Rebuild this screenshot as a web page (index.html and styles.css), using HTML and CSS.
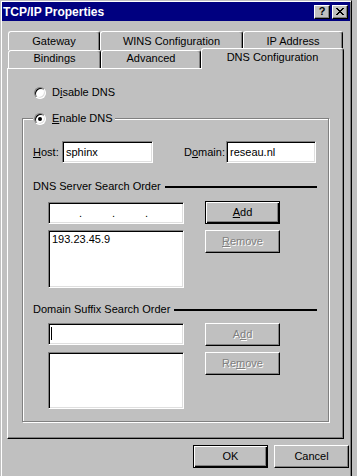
FILE: index.html
```
<!DOCTYPE html>
<html lang="en">
<head>
    <meta charset="UTF-8">
    <meta name="viewport" content="width=device-width, initial-scale=1.0">
    <title>TCP/IP Properties</title>
    <link rel="stylesheet" href="styles.css">
</head>
<body>
    <div class="window">
        <div class="titlebar">
            <span class="title">TCP/IP Properties</span>
            <div class="caption-btns">
                <span class="cap-btn help">?</span>
                <span class="cap-btn close">
                    <svg width="8" height="7" viewBox="0 0 8 7"><path d="M0 0h2v1h-2zM6 0h2v1h-2zM1 1h2v1h-2zM5 1h2v1h-2zM2 2h4v1h-4zM3 3h2v1h-2zM2 4h4v1h-4zM1 5h2v1h-2zM5 5h2v1h-2zM0 6h2v1h-2zM6 6h2v1h-2z" fill="#000"/></svg>
                </span>
            </div>
        </div>

        <div class="sheet">
            <div class="tabrow back">
                <div class="tab tab-gateway">Gateway</div>
                <div class="tab tab-wins">WINS Configuration</div>
                <div class="tab tab-ip">IP Address</div>
            </div>
            <div class="tabrow front">
                <div class="tab tab-bindings">Bindings</div>
                <div class="tab tab-advanced">Advanced</div>
                <div class="tab tab-dns selected">DNS Configuration</div>
            </div>

            <div class="panel">
                <div class="radio-row disable-row">
                    <span class="radio"></span>
                    <span>D<u>i</u>sable DNS</span>
                </div>

                <fieldset class="group">
                    <legend class="group-legend">
                        <span class="radio checked"></span><span><u>E</u>nable DNS</span>
                    </legend>

                    <div class="host-row">
                        <span class="lbl lbl-host"><u>H</u>ost:</span>
                        <div class="field host-field">sphinx</div>
                        <span class="lbl lbl-domain">D<u>o</u>main:</span>
                        <div class="field domain-field">reseau.nl</div>
                    </div>

                    <div class="section-label first">
                        <span>DNS Server Search Order</span>
                        <span class="rule"></span>
                    </div>
                    <div class="order-row">
                        <div class="order-fields">
                            <div class="field ip-field">
                                <span class="dot">.</span><span class="dot">.</span><span class="dot">.</span>
                            </div>
                            <div class="field listbox server-list">
                                <div class="list-item">193.23.45.9</div>
                            </div>
                        </div>
                        <div class="order-btns">
                            <div class="btn default"><u>A</u>dd</div>
                            <div class="btn disabled"><u>R</u>emove</div>
                        </div>
                    </div>

                    <div class="section-label second">
                        <span>Domain Suffix Search Order</span>
                        <span class="rule"></span>
                    </div>
                    <div class="order-row suffix-row">
                        <div class="order-fields">
                            <div class="field suffix-field"><span class="caret"></span></div>
                            <div class="field listbox suffix-list"></div>
                        </div>
                        <div class="order-btns">
                            <div class="btn disabled">A<u>d</u>d</div>
                            <div class="btn disabled">Re<u>m</u>ove</div>
                        </div>
                    </div>
                </fieldset>
            </div>

            <div class="footer">
                <div class="btn default">OK</div>
                <div class="btn">Cancel</div>
            </div>
        </div>
    </div>
</body>
</html>
```

FILE: styles.css
```
* {
    margin: 0;
    padding: 0;
    box-sizing: border-box;
}

html, body {
    width: 357px;
    height: 476px;
    overflow: hidden;
}

body {
    font-family: 'Liberation Sans', Arial, sans-serif;
    font-size: 11px;
    line-height: 13px;
    color: #000;
    background: #c0c0c0;
}

u {
    text-decoration: underline;
    text-underline-offset: 1px;
}

/* window frame */
.window {
    width: 352px;
    height: 480px;
    padding: 1px;
    background: #c0c0c0;
    border: 1px solid;
    border-color: #c0c0c0 #000 #000 #c0c0c0;
    box-shadow: inset 1px 1px #fff, inset -1px -1px #808080;
}

.titlebar {
    height: 19px;
    background: #000080;
    display: flex;
    align-items: center;
    justify-content: space-between;
    padding: 0 2px 0 1px;
}

.title {
    color: #fff;
    font-weight: bold;
    font-size: 12px;
    line-height: 14px;
}

.caption-btns {
    display: flex;
    gap: 2px;
}

.cap-btn {
    width: 16px;
    height: 14px;
    background: #c0c0c0;
    border: 1px solid;
    border-color: #fff #000 #000 #fff;
    box-shadow: inset -1px -1px #808080;
    display: flex;
    align-items: center;
    justify-content: center;
    font-weight: bold;
    font-size: 11px;
    line-height: 11px;
}

/* property sheet */
.sheet {
    padding: 10px 0 0 5px;
}

.tabrow {
    display: flex;
    margin-left: 1px;
}

.tab {
    background: #c0c0c0;
    text-align: center;
    white-space: nowrap;
    border-top: 1px solid #fff;
    border-left: 1px solid #fff;
    border-right: 1px solid #000;
    border-radius: 3px 3px 0 0;
    box-shadow: inset -1px 0 #808080;
}

.tabrow.back .tab {
    height: 19px;
    line-height: 18px;
}

.tabrow.front .tab {
    height: 18px;
    line-height: 15px;
}

.tab-gateway { width: 92px; }
.tab-wins { width: 143px; }
.tab-ip { width: 100px; }
.tab-bindings { width: 93px; }
.tab-advanced { width: 100px; }

.tabrow.front .tab-dns {
    width: 143px;
    height: 21px;
    line-height: 16px;
    margin-top: -2px;
    margin-bottom: -1px;
    position: relative;
    z-index: 1;
}

.panel {
    width: 337px;
    height: 371px;
    border: 1px solid;
    border-color: #fff #000 #000 #fff;
    box-shadow: inset -1px -1px #808080;
    padding: 17px 0 0 14px;
}

/* radios */
.radio-row {
    display: flex;
    align-items: center;
    height: 13px;
}

.disable-row {
    margin-left: 12px;
}

.radio {
    display: inline-block;
    width: 12px;
    height: 12px;
    border-radius: 50%;
    background: #fff;
    border: 1px solid;
    border-color: #808080 #fff #fff #808080;
    box-shadow: inset 1px 1px #000, inset -1px -1px #dfdfdf;
    margin-right: 6px;
    position: relative;
    flex-shrink: 0;
}

.radio.checked::after {
    content: '';
    position: absolute;
    left: 3px;
    top: 3px;
    width: 4px;
    height: 4px;
    border-radius: 50%;
    background: #000;
}

/* group box */
.group {
    width: 307px;
    margin-top: 13px;
    border: 1px solid #808080;
    box-shadow: inset 1px 1px #fff, 1px 1px #fff;
    padding: 0 0 12px 0;
    min-inline-size: 0;
}

.group-legend {
    margin-left: 10px;
    padding: 0 2px 0 1px;
    height: 13px;
    background: #c0c0c0;
    display: flex;
    align-items: center;
}

.host-row {
    display: flex;
    align-items: center;
    height: 22px;
    margin-top: 16px;
    padding-left: 10px;
}

.lbl {
    flex: none;
    white-space: nowrap;
}

.lbl-host { width: 29px; }

.lbl-domain {
    margin-left: 31px;
    margin-right: 1px;
}

.field {
    background: #fff;
    border: 1px solid;
    border-color: #808080 #fff #fff #808080;
    box-shadow: inset 1px 1px #000, inset -1px -1px #dfdfdf;
    padding: 0 3px;
    height: 22px;
    line-height: 20px;
    flex: none;
}

.host-field { width: 91px; }
.domain-field { width: 90px; }

.section-label {
    display: flex;
    align-items: center;
    height: 13px;
    margin-left: 10px;
    width: 284px;
}

.section-label.first { margin-top: 17px; }
.section-label.second { margin-top: 15px; }

.rule {
    flex: 1;
    height: 2px;
    background: #000;
    margin-left: 4px;
}

.order-row {
    display: flex;
    margin-top: 8px;
    padding-left: 25px;
}

.order-row.suffix-row {
    margin-top: 7px;
}

.order-fields {
    width: 136px;
    display: flex;
    flex-direction: column;
    gap: 6px;
    margin-top: 1px;
}

.suffix-row .order-fields {
    margin-top: 0;
    gap: 7px;
}

.ip-field {
    display: flex;
    padding-left: 30px;
    gap: 30px;
}

.dot {
    width: 3px;
}

.listbox {
    padding: 2px 3px;
    line-height: 13px;
}

.server-list { height: 58px; }
.suffix-list { height: 57px; }

.caret {
    display: inline-block;
    width: 1px;
    height: 13px;
    background: #000;
    margin-top: 3px;
    vertical-align: top;
}

.suffix-field {
    padding-left: 2px;
}

.order-btns {
    display: flex;
    flex-direction: column;
    gap: 6px;
    margin-left: 21px;
}

/* buttons */
.btn {
    width: 75px;
    height: 23px;
    background: #c0c0c0;
    border: 1px solid;
    border-color: #fff #000 #000 #fff;
    box-shadow: inset -1px -1px #808080;
    text-align: center;
    line-height: 20px;
}

.btn.default {
    border-color: #000;
    box-shadow: inset 1px 1px #fff, inset -1px -1px #000, inset -2px -2px #808080;
}

.btn.disabled {
    color: #808080;
    text-shadow: 1px 1px 0 #fff;
}

.footer {
    display: flex;
    justify-content: flex-end;
    gap: 6px;
    margin-top: 6px;
    width: 342px;
}
```
